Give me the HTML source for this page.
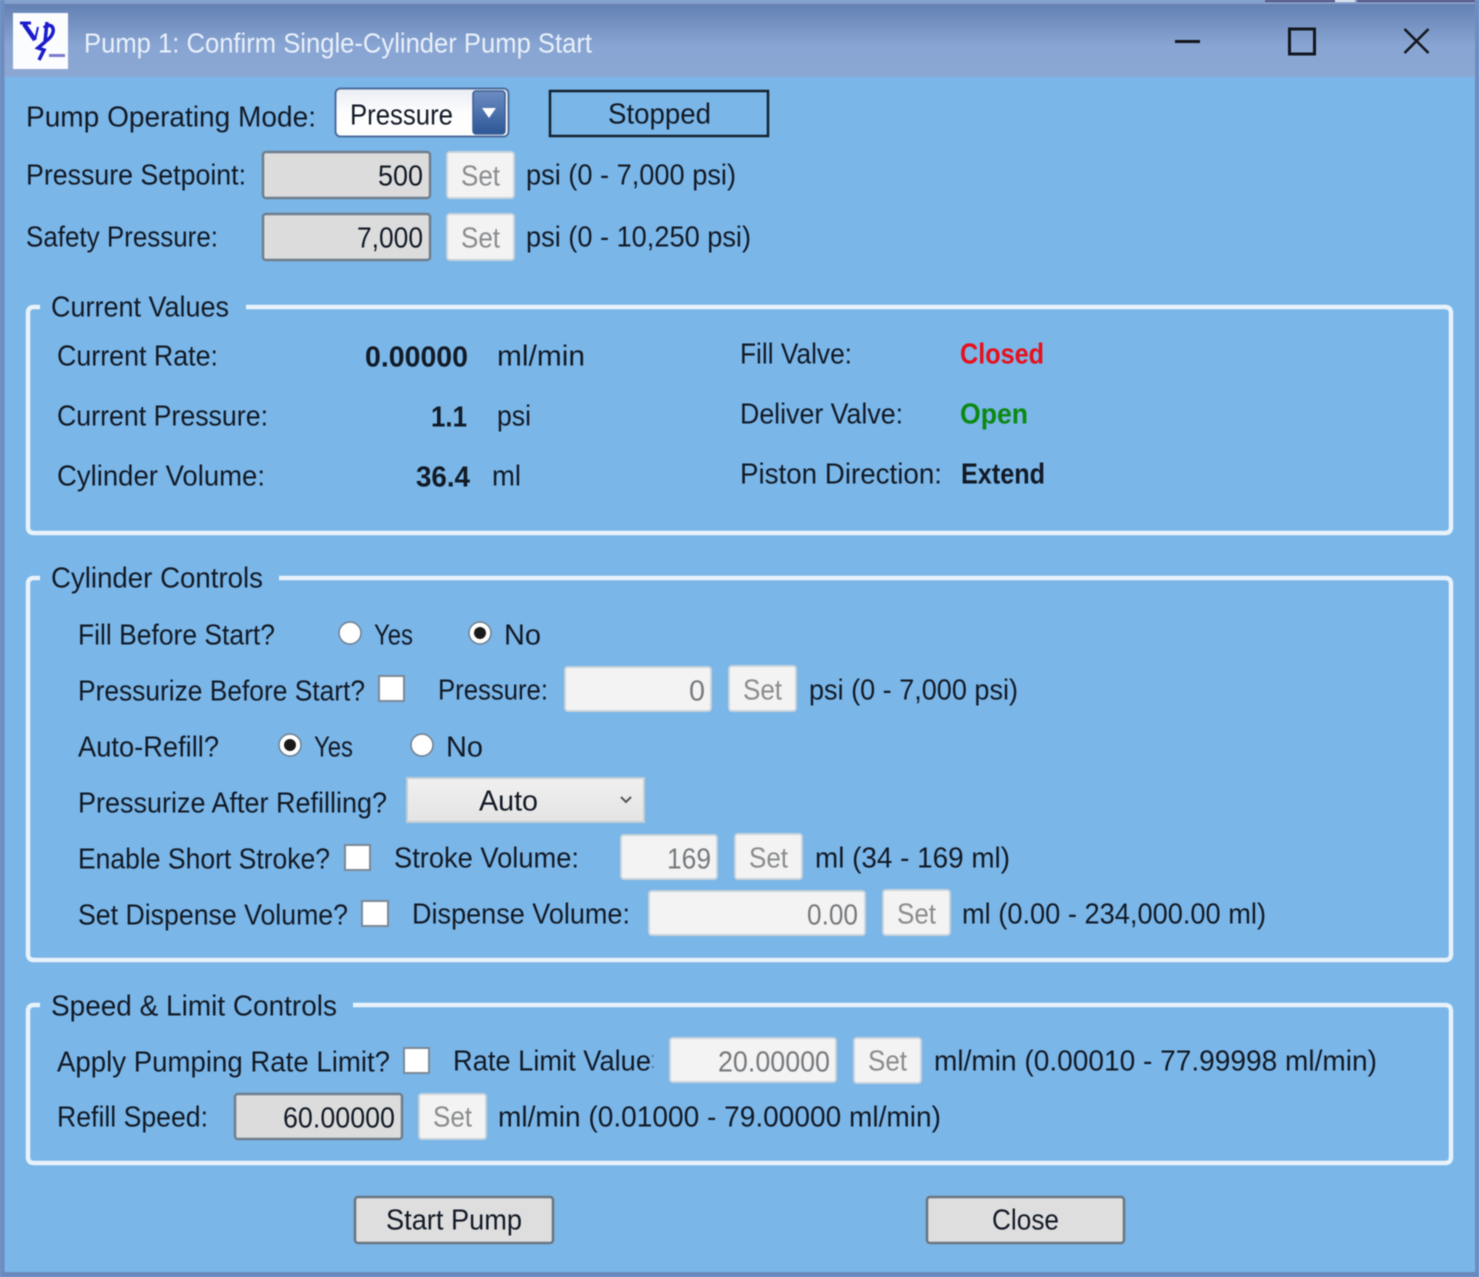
<!DOCTYPE html>
<html lang="en"><head><meta charset="utf-8"><title>Pump 1: Confirm Single-Cylinder Pump Start</title>
<style>
html,body{margin:0;padding:0;background:#7ab6e8;width:1479px;height:1277px;overflow:hidden}
svg{display:block;position:absolute;left:0;top:0;filter:blur(.5px)}
text{font-family:"Liberation Sans",sans-serif;font-size:29px;fill:#121a26;transform:translateY(-.5px)}
.low text,text.low{transform:translateY(.3px)}
.g{fill:#8b8d8f}.d{fill:#777a7d}.t{fill:#e9f0fa;font-size:28px}
.b{font-weight:bold}
.box{fill:#f3f3f3;stroke:#c8d3dc;stroke-width:2}
.inp{fill:#dcdcdc;stroke:#6f7f8c;stroke-width:2.5}
.btn{fill:#dedede;stroke:#68757f;stroke-width:2.5}
.grp{fill:none;stroke:#e8f2fa;stroke-width:4.5}
.chk{fill:#fff;stroke:#7b8996;stroke-width:2}
.rad{fill:#fff;stroke:#6d7f8f;stroke-width:1.5}
</style></head><body>
<svg width="1479" height="1277" viewBox="0 0 1479 1277" xmlns="http://www.w3.org/2000/svg">
<defs>
<linearGradient id="tb" x1="0" y1="0" x2="0" y2="1"><stop offset="0" stop-color="#617eb1"/><stop offset=".6" stop-color="#88a5d3"/><stop offset="1" stop-color="#8ba7d3"/></linearGradient>
<linearGradient id="combo" x1="0" y1="0" x2="0" y2="1"><stop offset="0" stop-color="#e9edf3"/><stop offset=".5" stop-color="#fdfdfe"/><stop offset="1" stop-color="#fff"/></linearGradient>
<linearGradient id="arrow" x1="0" y1="0" x2="0" y2="1"><stop offset="0" stop-color="#6d8dc2"/><stop offset="1" stop-color="#2d5797"/></linearGradient>
<linearGradient id="sel" x1="0" y1="0" x2="0" y2="1"><stop offset="0" stop-color="#f0f0f0"/><stop offset="1" stop-color="#e4e4e4"/></linearGradient>
</defs>
<rect width="1479" height="1277" fill="#7ab6e8"/>
<rect x="0" y="0" width="1479" height="77" fill="url(#tb)"/>
<rect x="0" y="0" width="1479" height="4" fill="#86a0cc"/>
<rect x="1265" y="0" width="70" height="2" fill="#544f7c"/><rect x="1335" y="0" width="20" height="2" fill="#e8e8ee"/><rect x="1357" y="0" width="122" height="2" fill="#544f7c"/>
<rect x="0" y="0" width="4.500" height="1277" fill="#6f8cbe"/>
<rect x="1475" y="0" width="4" height="1277" fill="#6f8cbe"/>
<rect x="0" y="1272" width="1479" height="5" fill="#6a88bb"/>

<rect x="13" y="13" width="55" height="56" fill="#fbfcfe"/>
<path d="M20 23H31" fill="none" stroke="#1c1ccc" stroke-width="3"/>
<path d="M24 24L35 40" fill="none" stroke="#1c1ccc" stroke-width="4.500"/>
<path d="M35 40L38 27" fill="none" stroke="#1c1ccc" stroke-width="2"/>
<path d="M47 22L45 42L38 48L44 50L39 60" fill="none" stroke="#1c1ccc" stroke-width="3.500"/>
<path d="M44 28C52 20 59 32 46 41" fill="none" stroke="#1c1ccc" stroke-width="3.500"/>
<rect x="49" y="54" width="16" height="3" fill="#7a7ad0"/>

<text class="t low" x="84" y="52" textLength="508" lengthAdjust="spacingAndGlyphs">Pump 1: Confirm Single-Cylinder Pump Start</text>

<rect x="1175" y="40" width="25" height="3" fill="#14161c"/>
<rect x="1289.500" y="29" width="25" height="25" fill="none" stroke="#14161c" stroke-width="3"/>
<path d="M1404.500 29L1428.500 53M1428.500 29L1404.500 53" stroke="#14161c" stroke-width="2.600" fill="none"/>

<text x="26" y="127" textLength="290" lengthAdjust="spacingAndGlyphs">Pump Operating Mode:</text>
<rect x="335.500" y="88.500" width="173" height="48" rx="5" fill="url(#combo)" stroke="#4d6d9e" stroke-width="2"/>
<text x="350" y="125" textLength="103" lengthAdjust="spacingAndGlyphs">Pressure</text>
<rect x="473" y="91" width="32" height="43" rx="3" fill="url(#arrow)" stroke="#3d5f94" stroke-width="1.500"/>
<path d="M482 108H496L489 118Z" fill="#fff"/>
<rect x="550" y="91" width="218" height="45" fill="#7ab6e8" stroke="#14212e" stroke-width="2.500"/>
<text x="608" y="124" textLength="103" lengthAdjust="spacingAndGlyphs">Stopped</text>

<text x="26" y="185" textLength="220" lengthAdjust="spacingAndGlyphs">Pressure Setpoint:</text>
<rect class="inp" x="263" y="152" width="167" height="46" rx="3"/>
<text x="378" y="186" textLength="45" lengthAdjust="spacingAndGlyphs">500</text>
<rect class="box" x="447" y="152" width="67" height="46" rx="3"/>
<text class="g" x="461" y="186" textLength="39" lengthAdjust="spacingAndGlyphs">Set</text>
<text x="526" y="185" textLength="210" lengthAdjust="spacingAndGlyphs">psi (0 - 7,000 psi)</text>

<text x="26" y="247" textLength="192" lengthAdjust="spacingAndGlyphs">Safety Pressure:</text>
<rect class="inp" x="263" y="214" width="167" height="46" rx="3"/>
<text x="357" y="248" textLength="66" lengthAdjust="spacingAndGlyphs">7,000</text>
<rect class="box" x="447" y="214" width="67" height="46" rx="3"/>
<text class="g" x="461" y="248" textLength="39" lengthAdjust="spacingAndGlyphs">Set</text>
<text x="526" y="247" textLength="225" lengthAdjust="spacingAndGlyphs">psi (0 - 10,250 psi)</text>

<path class="grp" d="M40 307H34Q28 307 28 313V527Q28 533 34 533H1445Q1451 533 1451 527V313Q1451 307 1445 307H246"/>
<text class="low" x="51" y="316" textLength="178" lengthAdjust="spacingAndGlyphs">Current Values</text>
<text x="57" y="366" textLength="161" lengthAdjust="spacingAndGlyphs">Current Rate:</text>
<text class="b" x="365" y="367" textLength="103" lengthAdjust="spacingAndGlyphs">0.00000</text>
<text x="497" y="366" textLength="88" lengthAdjust="spacingAndGlyphs">ml/min</text>
<text x="740" y="364" textLength="112" lengthAdjust="spacingAndGlyphs">Fill Valve:</text>
<text class="b" x="960" y="364" textLength="84" lengthAdjust="spacingAndGlyphs" style="fill:#e8101c">Closed</text>
<text x="57" y="426" textLength="211" lengthAdjust="spacingAndGlyphs">Current Pressure:</text>
<text class="b" x="431" y="427" textLength="36" lengthAdjust="spacingAndGlyphs">1.1</text>
<text x="497" y="426" textLength="34" lengthAdjust="spacingAndGlyphs">psi</text>
<text x="740" y="424" textLength="163" lengthAdjust="spacingAndGlyphs">Deliver Valve:</text>
<text class="b" x="960" y="424" textLength="68" lengthAdjust="spacingAndGlyphs" style="fill:#0b8a12">Open</text>
<text x="57" y="486" textLength="208" lengthAdjust="spacingAndGlyphs">Cylinder Volume:</text>
<text class="b" x="416" y="487" textLength="54" lengthAdjust="spacingAndGlyphs">36.4</text>
<text x="492" y="486" textLength="29" lengthAdjust="spacingAndGlyphs">ml</text>
<text x="740" y="484" textLength="202" lengthAdjust="spacingAndGlyphs">Piston Direction:</text>
<text class="b" x="961" y="484" textLength="84" lengthAdjust="spacingAndGlyphs">Extend</text>

<g class="low">
<path class="grp" d="M40 578H34Q28 578 28 584V954Q28 960 34 960H1445Q1451 960 1451 954V584Q1451 578 1445 578H279"/>
<text x="51" y="587" textLength="212" lengthAdjust="spacingAndGlyphs">Cylinder Controls</text>

<text x="78" y="644" textLength="197" lengthAdjust="spacingAndGlyphs">Fill Before Start?</text>
<circle class="rad" cx="350" cy="633" r="11"/>
<text x="374" y="644" textLength="39" lengthAdjust="spacingAndGlyphs">Yes</text>
<circle class="rad" cx="480" cy="633" r="11"/><circle cx="480" cy="633" r="6" fill="#1a1a1a"/>
<text x="504" y="644" textLength="37" lengthAdjust="spacingAndGlyphs">No</text>

<text x="78" y="700" textLength="287" lengthAdjust="spacingAndGlyphs">Pressurize Before Start?</text>
<rect class="chk" x="379" y="676" width="25" height="25"/>
<text x="438" y="699" textLength="110" lengthAdjust="spacingAndGlyphs">Pressure:</text>
<rect class="box" x="565" y="667" width="146" height="44" rx="3"/>
<text class="d" x="689" y="700" textLength="16" lengthAdjust="spacingAndGlyphs">0</text>
<rect class="box" x="729" y="666" width="67" height="45" rx="3"/>
<text class="g" x="743" y="699" textLength="39" lengthAdjust="spacingAndGlyphs">Set</text>
<text x="809" y="699" textLength="209" lengthAdjust="spacingAndGlyphs">psi (0 - 7,000 psi)</text>

<text x="78" y="756" textLength="141" lengthAdjust="spacingAndGlyphs">Auto-Refill?</text>
<circle class="rad" cx="290" cy="745" r="11"/><circle cx="290" cy="745" r="6" fill="#1a1a1a"/>
<text x="314" y="756" textLength="39" lengthAdjust="spacingAndGlyphs">Yes</text>
<circle class="rad" cx="422" cy="745" r="11"/>
<text x="446" y="756" textLength="37" lengthAdjust="spacingAndGlyphs">No</text>

<text x="78" y="812" textLength="309" lengthAdjust="spacingAndGlyphs">Pressurize After Refilling?</text>
<rect x="407" y="778" width="237" height="44" fill="url(#sel)" stroke="#c3ced6" stroke-width="2"/>
<text x="479" y="810" textLength="59" lengthAdjust="spacingAndGlyphs">Auto</text>
<path d="M621 797L626 802L631 797" fill="none" stroke="#555" stroke-width="2"/>

<text x="78" y="868" textLength="252" lengthAdjust="spacingAndGlyphs">Enable Short Stroke?</text>
<rect class="chk" x="345" y="845" width="25" height="25"/>
<text x="394" y="867" textLength="185" lengthAdjust="spacingAndGlyphs">Stroke Volume:</text>
<rect class="box" x="621" y="835" width="96" height="44" rx="3"/>
<text class="d" x="667" y="868" textLength="44" lengthAdjust="spacingAndGlyphs">169</text>
<rect class="box" x="735" y="834" width="67" height="45" rx="3"/>
<text class="g" x="749" y="867" textLength="39" lengthAdjust="spacingAndGlyphs">Set</text>
<text x="815" y="867" textLength="195" lengthAdjust="spacingAndGlyphs">ml (34 - 169 ml)</text>

<text x="78" y="924" textLength="270" lengthAdjust="spacingAndGlyphs">Set Dispense Volume?</text>
<rect class="chk" x="362" y="901" width="26" height="25"/>
<text x="412" y="923" textLength="218" lengthAdjust="spacingAndGlyphs">Dispense Volume:</text>
<rect class="box" x="649" y="891" width="216" height="44" rx="3"/>
<text class="d" x="807" y="924" textLength="51" lengthAdjust="spacingAndGlyphs">0.00</text>
<rect class="box" x="883" y="890" width="67" height="45" rx="3"/>
<text class="g" x="897" y="923" textLength="39" lengthAdjust="spacingAndGlyphs">Set</text>
<text x="962" y="923" textLength="304" lengthAdjust="spacingAndGlyphs">ml (0.00 - 234,000.00 ml)</text>

<path class="grp" d="M40 1005H34Q28 1005 28 1011V1157Q28 1163 34 1163H1445Q1451 1163 1451 1157V1011Q1451 1005 1445 1005H353"/>
<text x="51" y="1015" textLength="286" lengthAdjust="spacingAndGlyphs">Speed &amp; Limit Controls</text>

<text x="57" y="1071" textLength="333" lengthAdjust="spacingAndGlyphs">Apply Pumping Rate Limit?</text>
<rect class="chk" x="404" y="1048" width="25" height="25"/>
<text x="453" y="1070" textLength="198" lengthAdjust="spacingAndGlyphs">Rate Limit Value</text>
<rect x="652" y="1055" width="1.500" height="2" fill="#4a6a8a"/><rect x="652" y="1066" width="1.500" height="2" fill="#4a6a8a"/>
<rect class="box" x="670" y="1038" width="166" height="44" rx="3"/>
<text class="d" x="718" y="1071" textLength="112" lengthAdjust="spacingAndGlyphs">20.00000</text>
<rect class="box" x="854" y="1038" width="67" height="45" rx="3"/>
<text class="g" x="868" y="1070" textLength="39" lengthAdjust="spacingAndGlyphs">Set</text>
<text x="934" y="1070" textLength="443" lengthAdjust="spacingAndGlyphs">ml/min (0.00010 - 77.99998 ml/min)</text>

<text x="57" y="1126" textLength="151" lengthAdjust="spacingAndGlyphs">Refill Speed:</text>
<rect class="inp" x="235" y="1094" width="167" height="45" rx="3"/>
<text x="283" y="1127" textLength="112" lengthAdjust="spacingAndGlyphs">60.00000</text>
<rect class="box" x="419" y="1094" width="67" height="45" rx="3"/>
<text class="g" x="433" y="1126" textLength="39" lengthAdjust="spacingAndGlyphs">Set</text>
<text x="498" y="1126" textLength="443" lengthAdjust="spacingAndGlyphs">ml/min (0.01000 - 79.00000 ml/min)</text>

<rect class="btn" x="355" y="1197" width="198" height="46" rx="3"/>
<text x="386" y="1229" textLength="136" lengthAdjust="spacingAndGlyphs">Start Pump</text>
<rect class="btn" x="927" y="1197" width="197" height="46" rx="3"/>
<text x="992" y="1229" textLength="67" lengthAdjust="spacingAndGlyphs">Close</text>
</g>
</svg>
</body></html>
